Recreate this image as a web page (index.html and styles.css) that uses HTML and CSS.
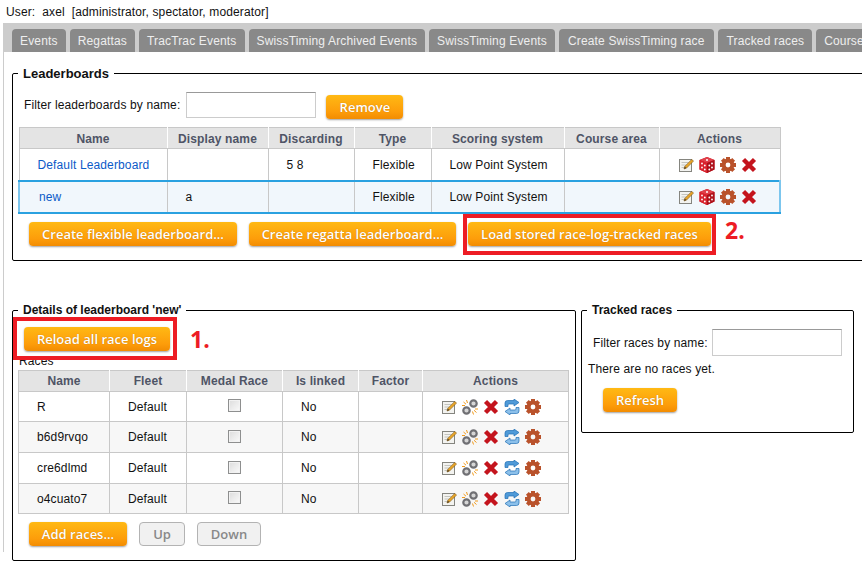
FILE: index.html
```html
<!DOCTYPE html>
<html lang="en">
<head>
  <meta charset="UTF-8">
  <title>Leaderboards</title>
  <link rel="stylesheet" href="styles.css">
</head>
<body>

<svg class="sprites" width="0" height="0">
  <symbol id="i-edit" viewBox="0 0 16 16">
    <rect x="1.500" y="2.500" width="12" height="12" fill="#f3f3f0" stroke="#85857f"/>
    <path d="M3.500 5.500h7M3.500 8h5M3.500 10.500h3" stroke="#c4c4be" fill="none"/>
    <path d="M6 12l.8-2.600 7-7 1.700 1.700-7 7z" fill="#e9a526" stroke="#7a5210" stroke-width=".6"/>
    <path d="M6 12l.8-2.600 1.700 1.700z" fill="#5c4a2a"/>
  </symbol>
  <symbol id="i-dice" viewBox="0 0 16 16">
    <path d="M8 0l7.500 3v9.500L8 16 .5 12.500V3z" fill="#c8141e"/>
    <path d="M8 0l7.500 3L8 6 .5 3z" fill="#e0404a"/>
    <path d="M8 6v10L.5 12.500V3z" fill="#d9222c"/>
    <path d="M8 6l7.500-3v9.500L8 16z" fill="#ad1019"/>
    <g fill="#fff">
      <circle cx="8" cy="3" r="1"/>
      <circle cx="3" cy="6.500" r=".9"/><circle cx="5.800" cy="8.500" r=".9"/><circle cx="3" cy="10.500" r=".9"/><circle cx="5.800" cy="12.500" r=".9"/>
      <circle cx="10.300" cy="8.500" r=".9"/><circle cx="13" cy="6.500" r=".9"/><circle cx="10.300" cy="12.500" r=".9"/><circle cx="13" cy="10.500" r=".9"/>
    </g>
  </symbol>
  <symbol id="i-gear" viewBox="0 0 16 16">
    <circle cx="8" cy="8" r="4.400" fill="none" stroke="#b9522b" stroke-width="4"/>
    <g fill="#b9522b">
      <rect x="6" y="0" width="4" height="3"/>
      <rect x="6" y="0" width="4" height="3" transform="rotate(45 8 8)"/>
      <rect x="6" y="0" width="4" height="3" transform="rotate(90 8 8)"/>
      <rect x="6" y="0" width="4" height="3" transform="rotate(135 8 8)"/>
      <rect x="6" y="0" width="4" height="3" transform="rotate(180 8 8)"/>
      <rect x="6" y="0" width="4" height="3" transform="rotate(225 8 8)"/>
      <rect x="6" y="0" width="4" height="3" transform="rotate(270 8 8)"/>
      <rect x="6" y="0" width="4" height="3" transform="rotate(315 8 8)"/>
    </g>
  </symbol>
  <symbol id="i-del" viewBox="0 0 16 16">
    <path d="M2.500 2.500l11 11M13.500 2.500l-11 11" stroke="#c4141d" stroke-width="4.400" fill="none"/>
  </symbol>
  <symbol id="i-link" viewBox="0 0 16 16">
    <circle cx="11.500" cy="4.500" r="3.200" fill="#d6d6d6" stroke="#707074" stroke-width="2.200"/>
    <circle cx="4.500" cy="11.500" r="3.200" fill="#d6d6d6" stroke="#707074" stroke-width="2.200"/>
    <path d="M4.500 1l1 3M1.500 3l2.500 2.200M0 6.500h3M11.500 15.500l-1-3M14.500 13.500L12 11.300M16 10h-3" stroke="#f09a1c" fill="none"/>
  </symbol>
  <symbol id="i-sync" viewBox="0 0 16 16">
    <path d="M1 7.500V4Q1 1.500 3.500 1.500H10V0l5 3.500-5 3.500V5H5Q4 5 4 6v1.500z" fill="#4f9ad8" stroke="#1f6fb5" stroke-width=".7"/>
    <path d="M15 8.500V12q0 2.500-2.500 2.500H6V16l-5-3.500L6 9v2h5q1 0 1-1V8.500z" fill="#8cc0ea" stroke="#1f6fb5" stroke-width=".7"/>
  </symbol>
</svg>

<div class="user-line">User:&nbsp; axel&nbsp; [administrator, spectator, moderator]</div>

<div class="tab-bar">
  <span class="tab">Events</span>
  <span class="tab">Regattas</span>
  <span class="tab">TracTrac Events</span>
  <span class="tab">SwissTiming Archived Events</span>
  <span class="tab">SwissTiming Events</span>
  <span class="tab tab-create">Create SwissTiming race</span>
  <span class="tab tab-tracked">Tracked races</span>
  <span class="tab">Courses</span>
</div>

<div class="content">
  <fieldset class="box box-leaderboards">
    <legend>Leaderboards</legend>
    <div class="filter-row">
      <label>Filter leaderboards by name:</label>
      <input type="text" class="text-input">
      <button class="btn btn-remove">Remove</button>
    </div>

    <table class="grid grid-leaderboards">
      <colgroup>
        <col class="w148"><col class="w101"><col class="w86"><col class="w77"><col class="w133"><col class="w95"><col class="w121">
      </colgroup>
      <thead>
        <tr><th>Name</th><th>Display name</th><th>Discarding</th><th>Type</th><th>Scoring system</th><th>Course area</th><th>Actions</th></tr>
      </thead>
      <tbody>
        <tr>
          <td class="name-link">Default Leaderboard</td><td></td><td>5 8</td><td>Flexible</td><td>Low Point System</td><td></td>
          <td><div class="icons">
            <svg class="icon"><use href="#i-edit"/></svg><svg class="icon"><use href="#i-dice"/></svg><svg class="icon"><use href="#i-gear"/></svg><svg class="icon"><use href="#i-del"/></svg>
          </div></td>
        </tr>
        <tr class="selected">
          <td class="name-link">new</td><td>a</td><td></td><td>Flexible</td><td>Low Point System</td><td></td>
          <td><div class="icons">
            <svg class="icon"><use href="#i-edit"/></svg><svg class="icon"><use href="#i-dice"/></svg><svg class="icon"><use href="#i-gear"/></svg><svg class="icon"><use href="#i-del"/></svg>
          </div></td>
        </tr>
      </tbody>
    </table>

    <div class="btn-row">
      <button class="btn btn-flexible">Create flexible leaderboard...</button>
      <button class="btn btn-regatta">Create regatta leaderboard...</button>
      <button class="btn btn-load">Load stored race-log-tracked races</button>
    </div>
  </fieldset>

  <div class="lower">
    <fieldset class="box box-details">
      <legend>Details of leaderboard 'new'</legend>
      <button class="btn btn-reload">Reload all race logs</button>
      <div class="races-label">Races</div>
      <table class="grid grid-races">
        <colgroup>
          <col class="w91"><col class="w77"><col class="w96"><col class="w76"><col class="w64"><col class="w146">
        </colgroup>
        <thead>
          <tr><th>Name</th><th>Fleet</th><th>Medal Race</th><th>Is linked</th><th>Factor</th><th>Actions</th></tr>
        </thead>
        <tbody>
          <tr>
            <td>R</td><td>Default</td><td class="center"><input type="checkbox" class="check"></td><td>No</td><td></td>
            <td><div class="icons"><svg class="icon"><use href="#i-edit"/></svg><svg class="icon"><use href="#i-link"/></svg><svg class="icon"><use href="#i-del"/></svg><svg class="icon"><use href="#i-sync"/></svg><svg class="icon"><use href="#i-gear"/></svg></div></td>
          </tr>
          <tr>
            <td>b6d9rvqo</td><td>Default</td><td class="center"><input type="checkbox" class="check"></td><td>No</td><td></td>
            <td><div class="icons"><svg class="icon"><use href="#i-edit"/></svg><svg class="icon"><use href="#i-link"/></svg><svg class="icon"><use href="#i-del"/></svg><svg class="icon"><use href="#i-sync"/></svg><svg class="icon"><use href="#i-gear"/></svg></div></td>
          </tr>
          <tr>
            <td>cre6dlmd</td><td>Default</td><td class="center"><input type="checkbox" class="check"></td><td>No</td><td></td>
            <td><div class="icons"><svg class="icon"><use href="#i-edit"/></svg><svg class="icon"><use href="#i-link"/></svg><svg class="icon"><use href="#i-del"/></svg><svg class="icon"><use href="#i-sync"/></svg><svg class="icon"><use href="#i-gear"/></svg></div></td>
          </tr>
          <tr>
            <td>o4cuato7</td><td>Default</td><td class="center"><input type="checkbox" class="check"></td><td>No</td><td></td>
            <td><div class="icons"><svg class="icon"><use href="#i-edit"/></svg><svg class="icon"><use href="#i-link"/></svg><svg class="icon"><use href="#i-del"/></svg><svg class="icon"><use href="#i-sync"/></svg><svg class="icon"><use href="#i-gear"/></svg></div></td>
          </tr>
        </tbody>
      </table>
      <div class="btn-row btn-row-races">
        <button class="btn btn-add">Add races...</button>
        <button class="btn-off btn-up">Up</button>
        <button class="btn-off btn-down">Down</button>
      </div>
    </fieldset>

    <fieldset class="box box-tracked">
      <legend>Tracked races</legend>
      <div class="tracked-filter">
        <label>Filter races by name:</label>
        <input type="text" class="text-input">
      </div>
      <div class="no-races">There are no races yet.</div>
      <button class="btn btn-refresh">Refresh</button>
    </fieldset>
  </div>
</div>

<!-- red marks drawn on top of the screenshot -->
<div class="mark mark-load"></div>
<div class="mark-num num-two">2.</div>
<div class="mark mark-reload"></div>
<div class="mark-num num-one">1.</div>

</body>
</html>
```

FILE: styles.css
```css
html, body {
  margin: 0;
  height: 567px;
  overflow: hidden;
}

body {
  position: relative;
  background-color: #fff;
  color: #111;
  font-family: "Liberation Sans", Arial, sans-serif;
  font-size: 12px;
  letter-spacing: .13px;
}

.sprites {
  display: block;
  height: 0;
}

.user-line {
  height: 23px;
  line-height: 25px;
  padding-left: 6px;
}

/* tabs */
.tab-bar {
  display: flex;
  gap: 4px;
  height: 23px;
  margin-left: 3px;
  padding: 6px 0 0 9px;
  background-color: #ccc;
  white-space: nowrap;
}

.tab {
  flex: none;
  padding: 0 8px;
  line-height: 24px;
  letter-spacing: .16px;
  color: #eee;
  background-color: #898989;
  border-radius: 4px 4px 0 0;
}

.tab-create {
  padding: 0 9px;
}

.tab-tracked {
  padding: 0 8px 0 9px;
}

.content {
  margin-left: 3px;
  padding: 14px 0 0 9px;
  border-left: 1px solid #ccc;
  height: 500px;
  box-sizing: border-box;
}

/* fieldsets */
.box {
  margin: 0;
  border: 1px solid #000;
  border-radius: 2px;
  box-sizing: border-box;
}

.box legend {
  padding: 0 5px;
  font-weight: bold;
  font-size: 12px;
  line-height: 15px;
  letter-spacing: 0;
}

.box-leaderboards {
  width: 900px;
  height: 195px;
  padding: 11px 0 0 5px;
  margin-left: -1px;
}

.box-leaderboards legend {
  font-size: 13px;
}

.filter-row {
  display: flex;
  align-items: flex-start;
  height: 26px;
  padding-left: 6px;
}

.filter-row label {
  margin-right: 6px;
  line-height: 26px;
}

.text-input {
  box-sizing: border-box;
  width: 130px;
  height: 26px;
  margin: 0;
  padding: 2px;
  border: 1px solid #ccc;
  border-top-color: #999;
  background-color: #fff;
}

.lower {
  display: flex;
  align-items: flex-start;
  gap: 5px;
  margin: 42px 0 0 -1px;
}

.box-details {
  width: 564px;
  height: 258px;
  padding: 9px 0 0 5px;
}

.box-tracked {
  width: 273px;
  height: 130px;
  padding: 11px 0 0 5px;
}

/* tables */
.grid {
  border-collapse: collapse;
  table-layout: fixed;
}

.grid-leaderboards {
  width: 761px;
  margin-top: 9px;
}

.grid-races {
  width: 550px;
}

.w148 { width: 148px; }
.w101 { width: 101px; }
.w86 { width: 86px; }
.w77 { width: 77px; }
.w133 { width: 133px; }
.w95 { width: 95px; }
.w121 { width: 121px; }
.w91 { width: 91px; }
.w96 { width: 96px; }
.w76 { width: 76px; }
.w64 { width: 64px; }
.w146 { width: 146px; }

.grid th {
  height: 20px;
  padding: 0;
  background-color: #e4e4e4;
  border: 1px solid #c8c8c8;
  border-left-color: #fff;
  border-right-color: #fff;
  color: #4f5466;
  font-weight: bold;
  text-align: center;
}

.grid-leaderboards th {
  height: 19px;
  padding-top: 1px;
}

.grid th:first-child {
  border-left-color: #c8c8c8;
}

.grid th:last-child {
  border-right-color: #c8c8c8;
}

.grid td {
  padding: 0 0 0 18px;
  border: 1px solid #c8c8c8;
}

.grid-leaderboards td {
  height: 31px;
}

.grid-races td {
  height: 30px;
}

.grid-races tbody tr:first-child td,
.grid-races tbody tr:last-child td {
  height: 29px;
}

.grid-races tbody tr:nth-child(even) td {
  background-color: #f7f7f7;
}

.grid .center {
  padding: 0;
  text-align: center;
}

.name-link {
  color: #0b5ac8;
}

.grid tr.selected td {
  height: 30px;
  background-color: #f1f7fc;
  border-top: 2px solid #2aa1e0;
  border-bottom: 2px solid #2aa1e0;
}

.grid tr.selected td:first-child {
  padding-left: 19px;
  border-left: 2px solid #7cc6ee;
}

.grid tr.selected td:last-child {
  border-right: 2px solid #7cc6ee;
}

.icons {
  display: flex;
  gap: 5px;
}

.icon {
  display: block;
  flex: none;
  width: 16px;
  height: 16px;
}

.check {
  appearance: none;
  display: inline-block;
  box-sizing: border-box;
  width: 13px;
  height: 13px;
  margin: 0 0 2px;
  vertical-align: middle;
  border: 1px solid #8e8f8f;
  background: linear-gradient(135deg, #dcdcdc, #fafafa);
  box-shadow: inset 0 0 0 1px #f2f2f2;
}

/* buttons */
.btn, .btn-off {
  height: 24px;
  margin: 0;
  padding: 0;
  border: none;
  border-radius: 4px;
  font-family: "Open Sans", sans-serif;
  font-size: 13px;
  font-weight: 600;
  line-height: 22px;
  white-space: nowrap;
}

.btn {
  color: #fff;
  background: linear-gradient(to bottom, #ffb914, #fd9d0a 70%, #f28c02);
  box-shadow: 0 1px 2px #a0a0a0;
  text-shadow: 0 0 1px #b86c00;
}

.btn-off {
  box-sizing: border-box;
  color: #888;
  background-color: #f1f1f1;
  border: 1px solid #b3b3b3;
}

.btn-row {
  display: flex;
  align-items: flex-start;
  gap: 12px;
  margin-top: 8px;
  padding-left: 11px;
}

.btn-remove {
  width: 77px;
  margin: 3px 0 0 10px;
}

.btn-flexible { width: 208px; }
.btn-regatta { width: 207px; }
.btn-load { width: 243px; }

.btn-reload {
  display: block;
  width: 146px;
  margin-left: 6px;
}

.races-label {
  height: 15px;
  margin: 3px 0 1px 1px;
  line-height: 15px;
}

.btn-row-races {
  margin-top: 8px;
}

.btn-add { width: 98px; }
.btn-up { width: 46px; }
.btn-down { width: 64px; }

.tracked-filter {
  display: flex;
  align-items: center;
  gap: 4px;
  padding-left: 6px;
}

.tracked-filter .text-input {
  height: 27px;
}

.no-races {
  margin: 6px 0 0 1px;
  line-height: 14px;
}

.btn-refresh {
  display: block;
  width: 74px;
  margin: 12px 0 0 16px;
}

/* red annotations over the page */
.mark {
  position: absolute;
  box-sizing: border-box;
  border: 4px solid #ed1c24;
}

.mark-load {
  left: 463px;
  top: 214px;
  width: 253px;
  height: 41px;
}

.mark-reload {
  left: 13px;
  top: 317px;
  width: 164px;
  height: 43px;
}

.mark-num {
  position: absolute;
  color: #ed1c24;
  font-family: "Open Sans", sans-serif;
  font-size: 23px;
  font-weight: 700;
  line-height: 26px;
}

.num-two {
  left: 725px;
  top: 217px;
}

.num-one {
  left: 190px;
  top: 326px;
}
```
